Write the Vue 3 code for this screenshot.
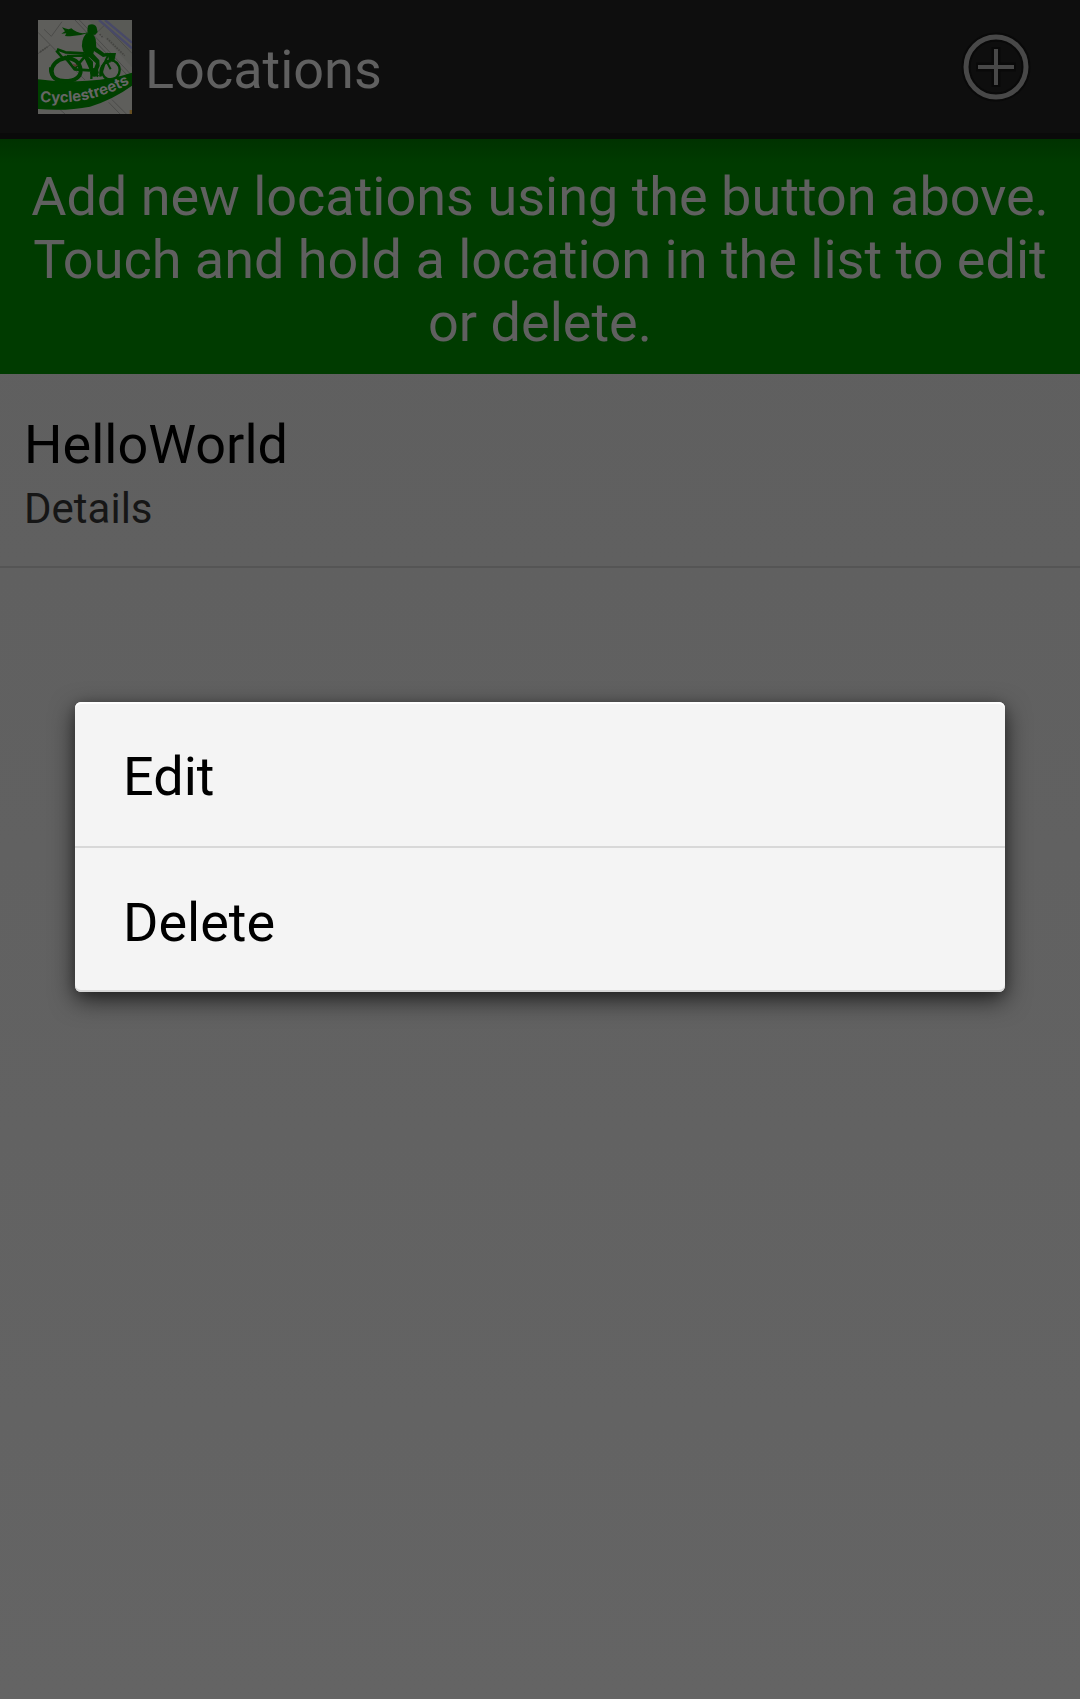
<script setup>
const locations = [{ name: 'HelloWorld', details: 'Details' }]
const actions = ['Edit', 'Delete']
</script>

<template>
  <div class="screen">
    <header class="bar">
      <svg class="logo" viewBox="24 30 282 282" role="img" aria-label="Cyclestreets">
        <rect x="24" y="30" width="282" height="282" fill="#5e5e5b" />
        <path d="M175 30L306 172V30Z" fill="#595a56" />
        <g fill="none" stroke="#4b4b49" stroke-width="3">
          <path d="M24 67L165 210M42 58L64 79L96 35M24 131L60 105M135 30L306 211M148 30L306 197M190 78L224 45M224 45L306 130M236 277L270 312M246 269L289 312M88 297L105 312" />
        </g>
        <g fill="none" stroke="#484967" stroke-width="7">
          <path d="M207 30L306 115M225 30L306 98" />
        </g>
        <path d="M209 72L220 84M231 85L284 137M30 126L52 111" fill="none" stroke="#454542" stroke-width="5" stroke-dasharray="5 3" />
        <path d="M299 300h7v12h-7z" fill="#685022" />
        <path d="M24 208Q88 217 172 212Q249 207 306 188V227Q250 268 180 290Q110 304 24 297Z" fill="#004000" />
        <g fill="none" stroke="#004000" stroke-linejoin="round">
          <path d="M152 181C150 154 128 142 104 145C80 149 65 166 65 184C66 204 83 213 105 213C135 213 153 200 152 181Z" stroke-width="12" />
          <path d="M62 172C60 200 80 213 106 217" stroke-width="10" />
          <ellipse cx="242" cy="180" rx="27" ry="29" stroke-width="7" />
          <path d="M81 118L106 127L164 130M79 122L98 144L164 132M103 138L134 178L180 181M134 175L165 139L184 180M110 138L178 136" stroke-width="8" />
          <path d="M212 199L226 153L235 134M211 200C208 174 220 158 242 154M242 178L229 153" stroke-width="6" />
        </g>
        <circle cx="193" cy="187" r="13" fill="#004000" />
        <path d="M184 184L205 199M185 187L184 207" stroke="#004000" stroke-width="7" />
        <path d="M173 53Q173 43 186 43Q200 45 201 58L203 66L196 74L178 75L172 64Z" fill="#004000" />
        <path d="M177 66L165 69Q142 72 124 55Q116 61 96 52L105 64L94 71L109 70L105 78Q138 82 174 69Z" fill="#004000" />
        <path d="M169 70Q190 64 197 87L199 112L223 130L234 128L235 138L219 141L192 123L190 131L208 151L209 168L201 187L189 184L198 160L178 142L164 133Q149 107 161 82Z" fill="#004000" />
        <path d="M165 130L189 155L189 180L181 185L173 155L157 138Z" fill="#004000" />
        <path d="M232 129H258L253 153L237 150Z" fill="#004000" />
        <path d="M125 161L144 165L136 171Z" fill="#5a3a32" />
        <path id="logo-curve" d="M30 276Q100 281 160 271Q240 255 324 208" fill="none" />
        <text class="logo-text"><textPath href="#logo-curve">Cyclestreets</textPath></text>
      </svg>
      <h1 class="title">Locations</h1>
      <button class="add" type="button" aria-label="Add location">
        <svg viewBox="0 0 72 72" aria-hidden="true">
          <g fill="none" stroke="#090909" stroke-width="9">
            <circle cx="36" cy="36" r="30" />
            <path d="M36 16V56M16 36H56" />
          </g>
          <g fill="none" stroke="#484848">
            <circle cx="36" cy="36" r="30" stroke-width="5" />
            <path d="M36 18V54M18 36H54" stroke-width="4" />
          </g>
        </svg>
      </button>
    </header>

    <p class="hint">Add new locations using the button above. Touch and hold a location in the list to edit or delete.</p>

    <ul class="list">
      <li v-for="place in locations" :key="place.name" class="row">
        <span class="name">{{ place.name }}</span>
        <span class="details">{{ place.details }}</span>
      </li>
    </ul>

    <div class="overlay">
      <div class="menu" role="menu">
        <button v-for="action in actions" :key="action" class="item" type="button" role="menuitem">{{ action }}</button>
      </div>
    </div>
  </div>
</template>

<style>
body {
  margin: 0;
  background: #636363;
}
</style>

<style scoped>
.screen {
  min-height: 100vh;
  background: linear-gradient(#5e5e5e, #646464);
  font-family: Roboto, "Liberation Sans", sans-serif;
}
.bar {
  display: flex;
  align-items: center;
  height: 133px;
  padding-left: 38px;
  background: #0e0e0e;
  border-bottom: 6px solid #0a0a0a;
}
.logo {
  width: 94px;
  height: 94px;
  margin-right: 13px;
}
.logo-text {
  font: bold 45px Inter, "Liberation Sans", sans-serif;
  fill: #666;
}
.title {
  flex: 1;
  margin: 0;
  padding-top: 6px;
  font-size: 54px;
  font-weight: 400;
  line-height: 63px;
  color: #606060;
}
.add {
  display: flex;
  align-items: center;
  justify-content: center;
  width: 168px;
  height: 133px;
  padding: 0;
  border: 0;
  background: none;
}
.add svg {
  width: 72px;
  height: 72px;
}
.hint {
  margin: 0;
  padding: 26px 24px 20px;
  background: linear-gradient(#003200, #003b00 24px);
  font-size: 54px;
  line-height: 63px;
  text-align: center;
  color: #606060;
}
.list {
  margin: 0;
  padding: 0;
  list-style: none;
}
.row {
  display: flex;
  flex-direction: column;
  gap: 8px;
  padding: 39px 24px 33px;
  border-bottom: 2px solid #555;
}
.name {
  font-size: 54px;
  line-height: 63px;
  color: #000;
}
.details {
  font-size: 42px;
  line-height: 49px;
  color: #161616;
}
.overlay {
  position: fixed;
  inset: 0;
  display: flex;
  align-items: center;
  justify-content: center;
  padding: 0 75px 5px;
}
.menu {
  flex: 1;
  overflow: hidden;
  border-radius: 6px;
  background: #f4f4f4;
  box-shadow: 0 8px 24px rgba(0, 0, 0, 0.65), 0 2px 12px rgba(0, 0, 0, 0.2),
    inset 0 2px #fff, inset 0 -2px #d8d8d8;
}
.item {
  display: block;
  width: 100%;
  height: 144px;
  padding: 4px 48px 0;
  border: 0;
  background: none;
  font: 400 54px/63px Roboto, "Liberation Sans", sans-serif;
  text-align: left;
  color: #000;
}
.item + .item {
  height: 146px;
  border-top: 2px solid #d8d8d8;
}
</style>
